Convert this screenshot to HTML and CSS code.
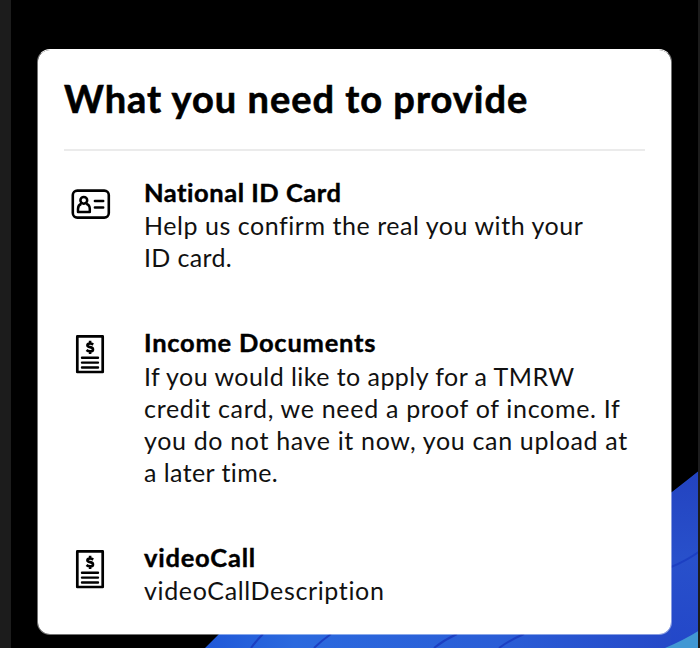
FILE: index.html
```html
<!DOCTYPE html>
<html lang="en">
<head>
<meta charset="utf-8">
<title>What you need to provide</title>
<link rel="stylesheet" href="styles.css">
</head>
<body>
<svg class="backdrop" viewBox="0 0 700 648" aria-hidden="true">
  <defs>
    <linearGradient id="blue" x1="205" y1="0" x2="700" y2="0" gradientUnits="userSpaceOnUse">
      <stop offset="0" stop-color="#2058d8"/>
      <stop offset=".18" stop-color="#2b69de"/>
      <stop offset=".6" stop-color="#2a5dd6"/>
      <stop offset=".93" stop-color="#2549c8"/>
      <stop offset="1" stop-color="#244bc7"/>
    </linearGradient>
    <linearGradient id="side" x1="0" y1="470" x2="0" y2="648" gradientUnits="userSpaceOnUse">
      <stop offset="0" stop-color="#2343c0"/>
      <stop offset=".5" stop-color="#2850cb"/>
      <stop offset="1" stop-color="#2347c9"/>
    </linearGradient>
  </defs>
  <path d="M205 648L219 634L500 600L672 492L700 470V648Z" fill="url(#blue)"/>
  <path d="M671 493Q686 483 700 470V648H671Z" fill="url(#side)"/>
  <path d="M251 648Q256 641 263 634M314 648Q321 641 331 634M434 648Q444 640 457 634M499 648Q510 640 524 634M671 567Q686 561 700 551" fill="none" stroke="#1c3fc2" stroke-width="2"/>
  <path d="M665 648Q684 640 700 630V648Z" fill="#4198d4"/>
  <path d="M0 0H11V648H0Z" fill="#1c1c1c"/>
  <path d="M698 0H700V648H698Z" fill="#1c1c1c"/>
</svg>
<main class="card">
  <h1>What you need to provide</h1>
  <section class="item">
    <svg class="icon" viewBox="0 0 60 50" aria-hidden="true">
      <g fill="none" stroke="#000">
        <rect x="12.8" y="10.6" width="36" height="27" rx="4.5" stroke-width="2.6"/>
        <circle cx="23.8" cy="20.3" r="3.4" stroke-width="2.5"/>
        <path d="M21.4 23.8Q18 25 18 29V32.1H29.8V29Q29.8 25 26.2 23.8" stroke-width="2.5" stroke-linejoin="round"/>
        <path d="M34.9 20.9H43.2M34.9 27.6H43.2" stroke-width="2.5" stroke-linecap="round"/>
      </g>
    </svg>
    <div class="copy">
      <h2 class="national">National ID Card</h2>
      <p><span class="l1">Help us confirm the real you with your</span> <span class="l2">ID card.</span></p>
    </div>
  </section>
  <section class="item income">
    <svg class="icon doc" viewBox="0 0 60 60" aria-hidden="true">
      <rect x="17.3" y="11.4" width="25.4" height="35.6" fill="none" stroke="#000" stroke-width="2.7" stroke-linejoin="round"/>
      <path d="M22 32.7H38M22 37.6H38M22 42.5H38" stroke="#000" stroke-width="2.4" stroke-linecap="round"/>
      <path d="M33.2 19.6Q31.7 18.5 30 18.5Q27.4 18.5 27.4 20.2Q27.4 21.6 30.1 22.1Q33 22.7 33 24.4Q33 26.3 30.1 26.3Q28 26.3 26.5 25M30.1 15.8V18.4M30.1 26.3V28.9" fill="none" stroke="#000" stroke-width="2.6"/>
    </svg>
    <div class="copy">
      <h2 class="inc">Income Documents</h2>
      <p><span class="l3">If you would like to apply for a TMRW</span> <span class="l4">credit card, we need a proof of income. If</span> <span class="l5">you do not have it now, you can upload at</span> <span class="l6">a later time.</span></p>
    </div>
  </section>
  <section class="item">
    <svg class="icon doc" viewBox="0 0 60 60" aria-hidden="true">
      <rect x="17.3" y="11.4" width="25.4" height="35.6" fill="none" stroke="#000" stroke-width="2.7" stroke-linejoin="round"/>
      <path d="M22 32.7H38M22 37.6H38M22 42.5H38" stroke="#000" stroke-width="2.4" stroke-linecap="round"/>
      <path d="M33.2 19.6Q31.7 18.5 30 18.5Q27.4 18.5 27.4 20.2Q27.4 21.6 30.1 22.1Q33 22.7 33 24.4Q33 26.3 30.1 26.3Q28 26.3 26.5 25M30.1 15.8V18.4M30.1 26.3V28.9" fill="none" stroke="#000" stroke-width="2.6"/>
    </svg>
    <div class="copy">
      <h2 class="vid">videoCall</h2>
      <p><span class="l7">videoCallDescription</span></p>
    </div>
  </section>
</main>
</body>
</html>
```

FILE: styles.css
```css
* { box-sizing: border-box; }
body {
  margin: 0;
  height: 648px;
  padding: 49px 28px 0 37px;
  overflow: hidden;
  background: #000;
  color: #000;
  font-family: Lato, sans-serif;
  font-variant-ligatures: none;
}
.backdrop {
  position: absolute;
  inset: 0;
  width: 700px;
  height: 648px;
  z-index: -1;
}
.card {
  width: 635px;
  height: 586px;
  padding: 25px 26px 0;
  border: 1px solid rgba(255, 255, 255, 0.45);
  border-top-color: #fff;
  border-radius: 13px;
  background: #fff;
  background-clip: padding-box;
}
h1, h2, p { margin: 0; white-space: nowrap; }
h1 {
  height: 76px;
  border-bottom: 2px solid #ebebeb;
  font-size: 38px;
  line-height: 46px;
  font-weight: 700;
  letter-spacing: 1px;
  -webkit-text-stroke: 0.6px #000;
}
.item {
  display: flex;
  height: 150px;
  padding-top: 25px;
}
.income { height: 215px; }
.icon {
  flex: none;
  width: 60px;
  height: 50px;
  margin: 4px 24px 0 -4px;
}
.doc { height: 60px; margin-top: -1px; }
.copy { font-size: 25px; line-height: 32px; }
h2 {
  height: 33px;
  font-size: 25.5px;
  line-height: 33px;
  font-weight: 700;
  -webkit-text-stroke: 0.4px #000;
}
p span { display: block; color: #111; }
.income p { padding-top: 1px; }
.national { letter-spacing: 0.52px; }
.inc { letter-spacing: 0.76px; }
.vid { letter-spacing: 0.76px; }
.l1 { letter-spacing: 0.54px; }
.l2 { letter-spacing: 0.35px; }
.l3 { letter-spacing: 0.45px; }
.l4 { letter-spacing: 0.69px; }
.l5 { letter-spacing: 0.66px; }
.l6 { letter-spacing: 0.42px; }
.l7 { letter-spacing: 0.64px; }
```
